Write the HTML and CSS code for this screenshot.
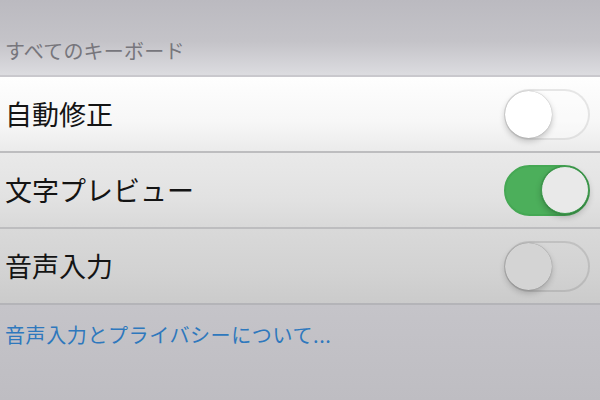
FILE: index.html
```html
<!DOCTYPE html>
<html lang="ja">
<head>
<meta charset="utf-8">
<title>キーボード</title>
<link rel="stylesheet" href="styles.css">
</head>
<body>
<div class="screen">
  <div class="header">すべてのキーボード</div>
  <div class="list">
    <div class="row row1">
      <span class="label">自動修正</span>
      <span class="switch off"><span class="knob"></span></span>
    </div>
    <div class="row row2">
      <span class="label">文字プレビュー</span>
      <span class="switch on"><span class="knob"></span></span>
    </div>
    <div class="row row3">
      <span class="label">音声入力</span>
      <span class="switch off dim"><span class="knob"></span></span>
    </div>
  </div>
  <div class="footer"><span class="link">音声入力とプライバシーについて...</span></div>
</div>
</body>
</html>
```

FILE: styles.css
```css
html, body {
  margin: 0;
  padding: 0;
}
body {
  width: 600px;
  height: 400px;
  overflow: hidden;
  font-family: "Noto Sans CJK JP", "Noto Sans", sans-serif;
}
.screen {
  display: flex;
  flex-direction: column;
  width: 600px;
  height: 400px;
}
.header {
  height: 77px;
  box-sizing: border-box;
  padding: 38px 0 0 5px;
  font-size: 20px;
  line-height: 26px;
  letter-spacing: 0.2px;
  color: #77767c;
  background: linear-gradient(to bottom, #bbbac0 0%, #c4c3c8 55%, #dcdce0 100%);
  border-bottom: 2px solid #c9c8cd;
}
.list {
  display: flex;
  flex-direction: column;
}
.row {
  height: 76px;
  box-sizing: border-box;
  display: flex;
  align-items: center;
  justify-content: space-between;
  padding: 0 10px 0 5px;
  border-bottom: 2px solid #bdbdbf;
}
.row1 {
  background: linear-gradient(to bottom, #fefefe 0%, #f7f7f7 60%, #ebebeb 100%);
}
.row2 {
  background: linear-gradient(to bottom, #e9e9e9 0%, #e2e2e2 60%, #d9d9d9 100%);
}
.row3 {
  background: linear-gradient(to bottom, #d9d9d9 0%, #d2d2d2 60%, #cbcbcb 100%);
  border-bottom-color: #b4b4b8;
}
.label {
  font-size: 27px;
  line-height: 34px;
  color: #141414;
}
.switch {
  position: relative;
  width: 86px;
  height: 51px;
  box-sizing: border-box;
  border-radius: 26px;
  display: flex;
  align-items: center;
}
.switch.off {
  border: 2px solid rgba(0, 0, 0, 0.09);
  background: rgba(255, 255, 255, 0.35);
}
.switch.off.dim {
  border-color: rgba(0, 0, 0, 0.1);
  background: transparent;
}
.switch.on {
  background: #4caf5b;
  border: 2px solid #45a854;
  justify-content: flex-end;
}
.knob {
  width: 47px;
  height: 47px;
  border-radius: 50%;
  background: #ffffff;
  box-shadow: 0 3px 6px rgba(0, 0, 0, 0.22), 0 0 1px rgba(0, 0, 0, 0.35);
}
.switch.off .knob {
  margin-left: -1px;
}
.switch.on .knob {
  background: #e9e9e9;
  border: 1px solid #3c9e4c;
  box-sizing: border-box;
  width: 48px;
  height: 48px;
  margin-right: -1px;
}
.switch.dim .knob {
  background: #d4d4d4;
  box-shadow: 0 3px 6px rgba(0, 0, 0, 0.2), 0 0 1px rgba(0, 0, 0, 0.4);
}
.footer {
  flex: 1;
  background: linear-gradient(to bottom, #c5c4c9 0%, #bebdc2 100%);
  padding: 17px 0 0 5px;
}
.link {
  font-size: 20px;
  line-height: 26px;
  letter-spacing: 0.6px;
  color: #2e78bd;
}
```
